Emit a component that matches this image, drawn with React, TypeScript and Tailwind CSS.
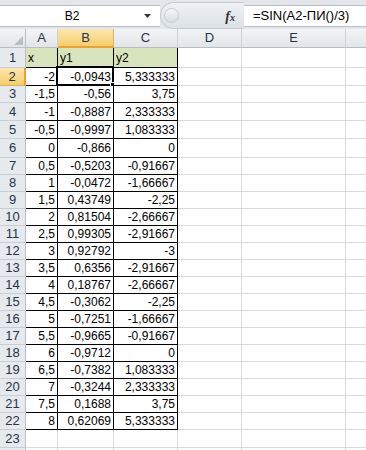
import React from "react";

const cols = [
  { key: "A", w: "w-[32px]" },
  { key: "B", w: "w-[56px]" },
  { key: "C", w: "w-[64px]" },
  { key: "D", w: "w-[64px]" },
  { key: "E", w: "w-[104px]" },
  { key: "F", w: "w-[64px]" },
];

// row heights in px (row 1 .. row 23)
const rowH = [
  "h-[20px]", "h-[18px]", "h-[17px]", "h-[18px]", "h-[18px]", "h-[19px]",
  "h-[17px]", "h-[17px]", "h-[17px]", "h-[17px]", "h-[17px]", "h-[17px]",
  "h-[17px]", "h-[17px]", "h-[17px]", "h-[17px]", "h-[17px]", "h-[17px]",
  "h-[17px]", "h-[17px]", "h-[17px]", "h-[17px]", "h-[18px]",
];

const xs = ["-2", "-1,5", "-1", "-0,5", "0", "0,5", "1", "1,5", "2", "2,5", "3", "3,5", "4", "4,5", "5", "5,5", "6", "6,5", "7", "7,5", "8"];
const y1 = ["-0,0943", "-0,56", "-0,8887", "-0,9997", "-0,866", "-0,5203", "-0,0472", "0,43749", "0,81504", "0,99305", "0,92792", "0,6356", "0,18767", "-0,3062", "-0,7251", "-0,9665", "-0,9712", "-0,7382", "-0,3244", "0,1688", "0,62069"];
const y2 = ["5,333333", "3,75", "2,333333", "1,083333", "0", "-0,91667", "-1,66667", "-2,25", "-2,66667", "-2,91667", "-3", "-2,91667", "-2,66667", "-2,25", "-1,66667", "-0,91667", "0", "1,083333", "2,333333", "3,75", "5,333333"];

function cellText(r: number, c: number) {
  if (r === 1) return ["x", "y1", "y2"][c] ?? "";
  if (r <= 22) return [xs, y1, y2][c]?.[r - 2] ?? "";
  return "";
}

function Toolbar() {
  return (
    <div className="flex h-[29px] items-start bg-[#e3e7ec] pt-[5px]">
      <div className="flex h-[22px] w-[160px] items-center border-y border-[#b6bec8] bg-white">
        <span className="flex-1 text-center text-[12px] text-black">B2</span>
        <svg width="8" height="5" viewBox="0 0 8 5" className="mr-[8px]">
          <path d="M0 0h7L3.5 4z" fill="#333" />
        </svg>
      </div>
      <div className="relative -mt-[3px] flex h-[27px] w-[84px] items-center rounded-l-full border border-r-0 border-[#c4cad2] bg-gradient-to-b from-[#eef1f4] to-[#dde2e8]">
        <div className="ml-[3px] h-[15px] w-[15px] rounded-full border border-[#c7ccd2] bg-gradient-to-b from-[#f6f7f8] to-[#d9dde2]" />
        <span className="ml-auto mr-[9px] mt-[1px] font-['Liberation_Serif',serif] text-[14px] font-bold italic text-[#333]">
          f<span className="text-[10px]">x</span>
        </span>
      </div>
      <div className="flex h-[22px] flex-1 items-center border-y border-[#b6bec8] bg-white pl-[9px] text-[13px] text-black">
        =SIN(A2-ПИ()/3)
      </div>
    </div>
  );
}

function ColHeader() {
  return (
    <div className="flex h-[19px]">
      <div className="relative w-[26px] shrink-0 border-r border-b border-[#b9bec5] bg-gradient-to-b from-[#f3f4f5] to-[#e2e5e9]">
        <svg width="9" height="9" viewBox="0 0 9 9" className="absolute bottom-[2px] right-[2px]">
          <path d="M9 0V9H0z" fill="#b9bec5" />
        </svg>
      </div>
      {cols.map((c) =>
        c.key === "B" ? (
          <div
            key={c.key}
            className={`${c.w} shrink-0 border-r border-b-2 border-r-[#e0b25a] border-b-[#f0a030] bg-gradient-to-b from-[#fce6ae] to-[#f6cd6a] text-center text-[13px] leading-[17px] text-[#26334a]`}
          >
            {c.key}
          </div>
        ) : (
          <div
            key={c.key}
            className={`${c.w} shrink-0 border-r border-b border-r-[#cdd2d8] border-b-[#b9bec5] bg-gradient-to-b from-[#f3f4f5] to-[#e2e5e9] text-center text-[13px] leading-[18px] text-[#26334a]`}
          >
            {c.key === "F" ? "" : c.key}
          </div>
        )
      )}
    </div>
  );
}

function Row({ r }: { r: number }) {
  const sel = r === 2;
  return (
    <div className={`flex ${rowH[r - 1] ?? "h-[17px]"}`}>
      <div
        className={`flex w-[26px] shrink-0 items-center justify-center border-b text-[13px] text-[#26334a] ${
          sel
            ? "border-r-2 border-b-[#e0b25a] border-r-[#f0a030] bg-gradient-to-b from-[#fce6ae] to-[#f6cd6a]"
            : "border-r border-b-[#c9ced5] border-r-[#b9bec5] bg-[#e6e9ed]"
        }`}
      >
        {r <= 23 ? r : ""}
      </div>
      {cols.map((c, ci) => {
        const data = ci < 3 && r <= 22;
        const text = data ? cellText(r, ci) : "";
        const header = r === 1 && ci < 3;
        return (
          <div
            key={c.key}
            className={`relative flex ${c.w} shrink-0 items-center overflow-visible border-r border-b px-[2px] text-[12px] text-black ${
              data ? "border-black" : "border-[#d9d9d9]"
            } ${header ? "justify-start bg-[#d8e4bc]" : "justify-end bg-white"}`}
          >
            <span className="whitespace-nowrap">{text}</span>
            {sel && ci === 1 && (
              <>
                <div className="pointer-events-none absolute -left-[2px] -top-[2px] -right-[1px] -bottom-[1px] border-2 border-black" />
                <div className="absolute -bottom-[4px] -right-[4px] h-[7px] w-[7px] border border-white bg-black" />
              </>
            )}
          </div>
        );
      })}
    </div>
  );
}

export default function App() {
  return (
    <div className="h-[450px] w-[366px] overflow-hidden bg-white font-['Liberation_Sans',Arial,sans-serif]">
      <Toolbar />
      <ColHeader />
      {Array.from({ length: 24 }, (_, i) => (
        <Row key={i} r={i + 1} />
      ))}
    </div>
  );
}
